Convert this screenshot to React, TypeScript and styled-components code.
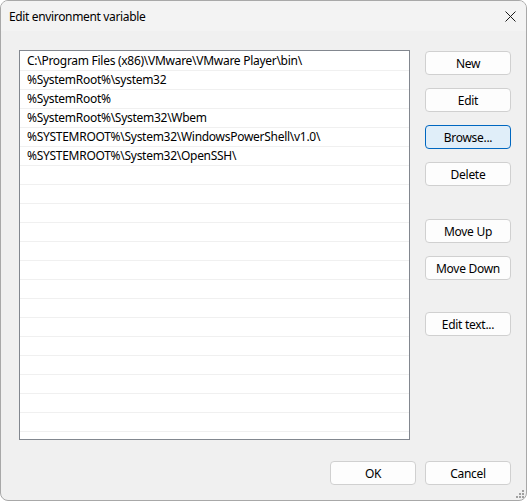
import React from "react";
import styled, { createGlobalStyle } from "styled-components";

const Global = createGlobalStyle`
  html, body { margin: 0; padding: 0; background: #ffffff; }
  body { font-family: "Noto Sans", "Liberation Sans", sans-serif; letter-spacing: -0.28px; }
  * { box-sizing: border-box; }
`;

const Window = styled.div`
  width: 527px;
  height: 501px;
  border: 1px solid #a8a8a8;
  border-radius: 8px;
  background: #f0f0f0;
  overflow: hidden;
  display: flex;
  flex-direction: column;
  position: relative;
`;

const TitleBar = styled.div`
  height: 30px;
  flex: none;
  background: #f3f3f3;
  display: flex;
  align-items: center;
  justify-content: space-between;
  padding: 0 10px 0 8px;
`;

const Title = styled.span`
  font-size: 12px;
  color: #000;
  letter-spacing: -0.35px;
`;

const CloseButton = styled.div`
  width: 12px;
  height: 12px;
  display: flex;
  align-items: center;
  justify-content: center;
`;

const Body = styled.div`
  flex: 1;
  display: flex;
  flex-direction: column;
  padding: 19px 15px 0 18px;
`;

const Main = styled.div`
  display: flex;
  gap: 15px;
`;

const ListBox = styled.div`
  width: 392px;
  height: 390px;
  background: #fff;
  border: 1px solid #82878f;
  padding-top: 1px;
  overflow: hidden;
`;

const Row = styled.div`
  height: 19px;
  border-bottom: 1px solid #f0f0f0;
  padding-left: 7px;
  font-size: 12px;
  line-height: 18px;
  color: #000;
  white-space: nowrap;
`;

const Side = styled.div`
  display: flex;
  flex-direction: column;
  width: 86px;
`;

const Button = styled.button<{ $top?: number; $focused?: boolean }>`
  margin-top: ${(p) => p.$top ?? 0}px;
  width: 86px;
  height: 24px;
  border-radius: 4px;
  border: 1px solid ${(p) => (p.$focused ? "#0067c0" : "#d0d0d0")};
  background: ${(p) => (p.$focused ? "#e0eef9" : "#fdfdfd")};
  font-family: inherit;
  letter-spacing: inherit;
  font-size: 12px;
  color: #000;
  padding: 0;
  display: flex;
  align-items: center;
  justify-content: center;
`;

const Footer = styled.div`
  display: flex;
  justify-content: flex-end;
  gap: 9px;
  margin-top: 21px;
`;

const Grip = styled.svg`
  position: absolute;
  right: 2px;
  bottom: 2px;
`;

const paths = [
  "C:\\Program Files (x86)\\VMware\\VMware Player\\bin\\",
  "%SystemRoot%\\system32",
  "%SystemRoot%",
  "%SystemRoot%\\System32\\Wbem",
  "%SYSTEMROOT%\\System32\\WindowsPowerShell\\v1.0\\",
  "%SYSTEMROOT%\\System32\\OpenSSH\\",
];

const rows = Array.from({ length: 21 }, (_, i) => paths[i] ?? "");

export default function App() {
  return (
    <>
      <Global />
      <Window>
        <TitleBar>
          <Title>Edit environment variable</Title>
          <CloseButton>
            <svg width="11" height="11" viewBox="0 0 11 11">
              <path d="M0.5 0.5 L10.5 10.5 M10.5 0.5 L0.5 10.5" stroke="#1a1a1a" strokeWidth="1" />
            </svg>
          </CloseButton>
        </TitleBar>
        <Body>
          <Main>
            <ListBox>
              {rows.map((r, i) => (
                <Row key={i}>{r}</Row>
              ))}
            </ListBox>
            <Side>
              <Button $top={1}>New</Button>
              <Button $top={13}>Edit</Button>
              <Button $top={13} $focused>Browse...</Button>
              <Button $top={13}>Delete</Button>
              <Button $top={33}>Move Up</Button>
              <Button $top={13}>Move Down</Button>
              <Button $top={32}>Edit text...</Button>
            </Side>
          </Main>
          <Footer>
            <Button>OK</Button>
            <Button>Cancel</Button>
          </Footer>
        </Body>
        <Grip width="8" height="8" viewBox="0 0 8 8">
          <rect x="6" y="0" width="2" height="2" fill="#a0a0a0" />
          <rect x="3" y="3" width="2" height="2" fill="#a0a0a0" />
          <rect x="6" y="3" width="2" height="2" fill="#a0a0a0" />
          <rect x="0" y="6" width="2" height="2" fill="#a0a0a0" />
          <rect x="3" y="6" width="2" height="2" fill="#a0a0a0" />
          <rect x="6" y="6" width="2" height="2" fill="#a0a0a0" />
        </Grip>
      </Window>
    </>
  );
}
